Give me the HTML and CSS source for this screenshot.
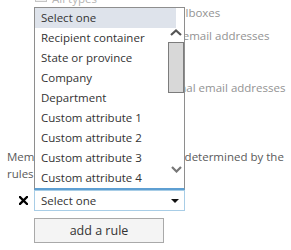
FILE: index.html
```html
<!DOCTYPE html>
<html>
  <head>
    <title>Membership rules</title>
    <meta charset="utf-8" />
    <link rel="stylesheet" href="styles.css">
  </head>
  <body>
    <div class="page">
      <div class="type_list">
        <div class="type_row type_first">
          <span class="check"></span>
          <span class="type_label">All types</span>
        </div>
        <div class="type_row type_short">
          <span class="check"></span>
          <span class="type_label">Users with Exchange mailboxes</span>
        </div>
        <div class="type_row">
          <span class="check"></span>
          <span class="type_label">Mail users with external email addresses</span>
        </div>
        <div class="type_row">
          <span class="check"></span>
          <span class="type_label">Resource mailboxes</span>
        </div>
        <div class="type_row">
          <span class="check"></span>
          <span class="type_label">Mail contacts with external email addresses</span>
        </div>
        <div class="type_row">
          <span class="check"></span>
          <span class="type_label">Mail-enabled groups</span>
        </div>
      </div>

      <p class="rules_note">Members of this group will all be determined by the rules you set up below.</p>

      <div class="rule_row">
        <span class="remove_rule">
          <svg width="9" height="9" viewBox="0 0 9 9">
            <path d="M1 1 L8 8 M8 1 L1 8" stroke="#000" stroke-width="2.3" stroke-linecap="square" />
          </svg>
        </span>
        <div class="rule_select">
          <span>Select one</span>
          <span class="select_arrow"></span>
        </div>
      </div>

      <button class="add_rule">add a rule</button>
    </div>

    <div class="dropdown">
      <div class="option option_selected">Select one</div>
      <div class="option">Recipient container</div>
      <div class="option">State or province</div>
      <div class="option">Company</div>
      <div class="option">Department</div>
      <div class="option">Custom attribute 1</div>
      <div class="option">Custom attribute 2</div>
      <div class="option">Custom attribute 3</div>
      <div class="option">Custom attribute 4</div>
      <div class="scrollbar">
        <svg class="scroll_up" width="12" height="7" viewBox="0 0 12 7">
          <path d="M1 6 L6 1.5 L11 6" fill="none" stroke="#555" stroke-width="2.2" />
        </svg>
        <div class="scroll_thumb"></div>
        <svg class="scroll_down" width="11" height="7" viewBox="0 0 11 7">
          <path d="M1 1 L5.5 5.5 L10 1" fill="none" stroke="#777" stroke-width="2.2" />
        </svg>
      </div>
    </div>
  </body>
</html>
```

FILE: styles.css
```css
body {
  margin: 0;
  padding: 0;
  background-color: #fff;
  font-family: "Open Sans", "Noto Sans", sans-serif;
  font-size: 11.5px;
  color: #333;
  overflow: hidden;
}

.page {
  padding-left: 7px;
  width: 284px;
}

/* recipient type checkboxes, mostly under the open list */
.type_list {
  display: flex;
  flex-direction: column;
  margin-top: -8px;
}
.type_row {
  height: 26px;
  display: flex;
  align-items: center;
  padding-left: 28px;
  color: #939393;
  white-space: nowrap;
}
.type_first,
.type_short {
  height: 14px;
}
.type_first {
  color: #b5b5b5;
}
.type_short {
  margin-bottom: 3px;
}
.check {
  width: 10px;
  height: 10px;
  border: 1px solid #c6c6c6;
  background-color: #f2f2f2;
  margin-right: 5px;
  flex-shrink: 0;
}
.type_first .check {
  margin-top: -6px;
}
.type_label {
  line-height: 14px;
}

.rules_note {
  margin: 21px 0 0;
  line-height: 17px;
  color: #5a5a5a;
}

/* the rule being edited */
.rule_row {
  display: flex;
  align-items: center;
  margin-top: 8px;
}
.remove_rule {
  width: 27px;
  display: flex;
  justify-content: flex-end;
  padding-right: 6px;
  box-sizing: border-box;
}
.remove_rule svg {
  display: block;
}
.rule_select {
  width: 151px;
  height: 21px;
  box-sizing: border-box;
  border: 1px solid #a8cde6;
  padding: 0 5px 0 6px;
  display: flex;
  align-items: center;
  justify-content: space-between;
  color: #333;
}
.select_arrow {
  width: 0;
  height: 0;
  border-left: 4px solid transparent;
  border-right: 4px solid transparent;
  border-top: 4px solid #111;
}

.add_rule {
  display: block;
  margin: 7px 0 0 27px;
  width: 130px;
  height: 25px;
  border: 1px solid #a9a9a9;
  background-color: #f4f4f4;
  font-family: "Open Sans", "Noto Sans", sans-serif;
  font-size: 12.5px;
  color: #333;
  padding: 0;
}

/* open drop-down list, floating over the form */
.dropdown {
  position: absolute;
  left: 34px;
  top: 7px;
  width: 151px;
  box-sizing: border-box;
  border: 1px solid #8e8e8e;
  border-bottom: 2px solid #5e9fd2;
  background-color: #fff;
  padding-right: 8px;
}
.option {
  height: 20px;
  line-height: 20px;
  padding-left: 6px;
  color: #333;
  white-space: nowrap;
}
.option_selected {
  background-color: #dee3eb;
}
.scrollbar {
  position: absolute;
  top: 0;
  right: 0;
  width: 16px;
  height: 100%;
}
.scroll_up {
  position: absolute;
  left: 2px;
  top: 21px;
}
.scroll_thumb {
  position: absolute;
  left: 0;
  top: 34px;
  width: 16px;
  height: 51px;
  box-sizing: border-box;
  border: 1px solid #7c7c7c;
  background-color: #d8d8d8;
}
.scroll_down {
  position: absolute;
  left: 3px;
  top: 158px;
}
```
